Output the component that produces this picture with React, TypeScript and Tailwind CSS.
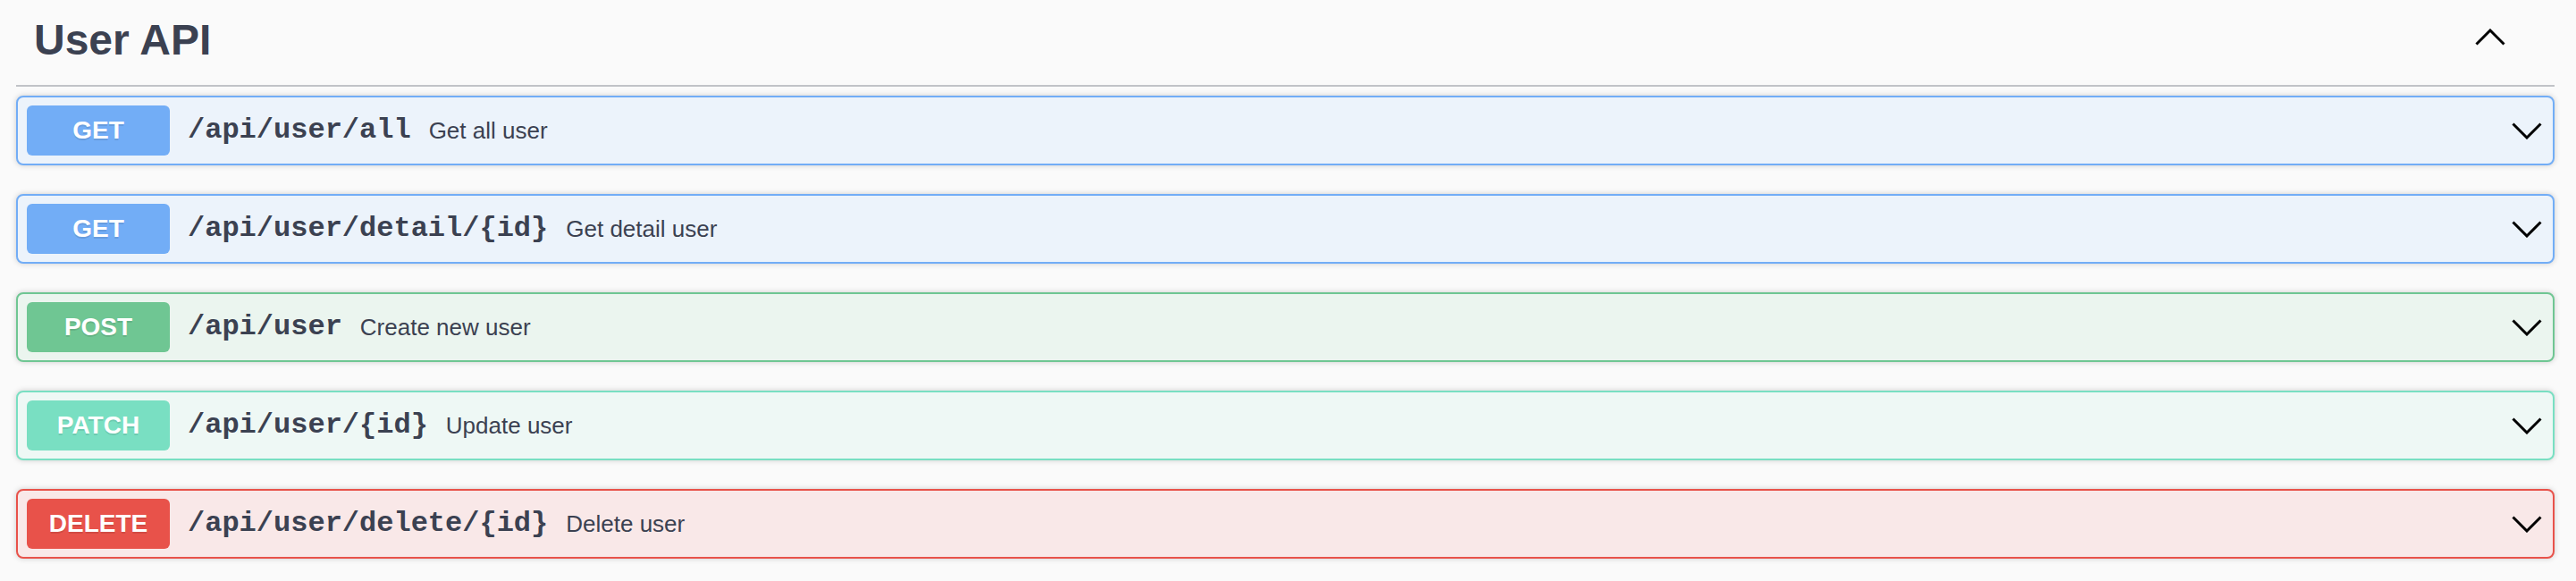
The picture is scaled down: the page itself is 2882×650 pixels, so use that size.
import React from "react";

type Op = {
  method: string;
  path: string;
  summary: string;
  badge: string;
  row: string;
};

const ops: Op[] = [
  {
    method: "GET",
    path: "/api/user/all",
    summary: "Get all user",
    badge: "bg-[#72adf6]",
    row: "bg-[#ecf3fb] border-[#72adf6]",
  },
  {
    method: "GET",
    path: "/api/user/detail/{id}",
    summary: "Get detail user",
    badge: "bg-[#72adf6]",
    row: "bg-[#ecf3fb] border-[#72adf6]",
  },
  {
    method: "POST",
    path: "/api/user",
    summary: "Create new user",
    badge: "bg-[#6fc693]",
    row: "bg-[#ebf5ef] border-[#6fc693]",
  },
  {
    method: "PATCH",
    path: "/api/user/{id}",
    summary: "Update user",
    badge: "bg-[#79dfc2]",
    row: "bg-[#eef8f5] border-[#79dfc2]",
  },
  {
    method: "DELETE",
    path: "/api/user/delete/{id}",
    summary: "Delete user",
    badge: "bg-[#e8524a]",
    row: "bg-[#f9e8e8] border-[#e8524a]",
  },
];

function ChevronDown() {
  return (
    <svg width="34" height="19" viewBox="0 0 34 19" className="shrink-0 mr-[2px]">
      <polyline
        points="1.5,1.5 17,17 32.5,1.5"
        fill="none"
        stroke="#000"
        strokeWidth="3"
      />
    </svg>
  );
}

function ChevronUp() {
  return (
    <svg width="34" height="19" viewBox="0 0 34 19" className="shrink-0">
      <polyline
        points="1.5,17.5 17,2 32.5,17.5"
        fill="none"
        stroke="#000"
        strokeWidth="3"
      />
    </svg>
  );
}

export default function App() {
  return (
    <div className="min-h-screen bg-[#fafafa] pl-[18px] pr-[24px] font-['Liberation_Sans',Arial,sans-serif] text-[#3b4151]">
      <div className="flex h-[97px] items-start justify-between border-b-2 border-[#c1c3c7]">
        <h4 className="pl-[20px] pt-[21px] text-[48px] font-bold leading-[48px]">User API</h4>
        <div className="mr-[55px] mt-[32px] flex">
          <ChevronUp />
        </div>
      </div>
      <div className="mt-[10px] flex flex-col gap-[32px]">
        {ops.map((op, i) => (
          <div
            key={i}
            className={`flex h-[78px] items-center rounded-[8px] border-2 px-[10px] shadow-[0_0_6px_rgba(0,0,0,0.19)] ${op.row}`}
          >
            <div
              className={`flex h-[56px] w-[160px] shrink-0 items-center justify-center rounded-[6px] text-[28px] font-bold text-white [text-shadow:0_2px_0_rgba(0,0,0,0.1)] ${op.badge}`}
            >
              {op.method}
            </div>
            <span className="px-[20px] font-['Liberation_Mono','Courier_New',monospace] text-[32px] font-bold whitespace-nowrap">
              {op.path}
            </span>
            <span className="flex-1 text-[26px] whitespace-nowrap">{op.summary}</span>
            <ChevronDown />
          </div>
        ))}
      </div>
    </div>
  );
}
